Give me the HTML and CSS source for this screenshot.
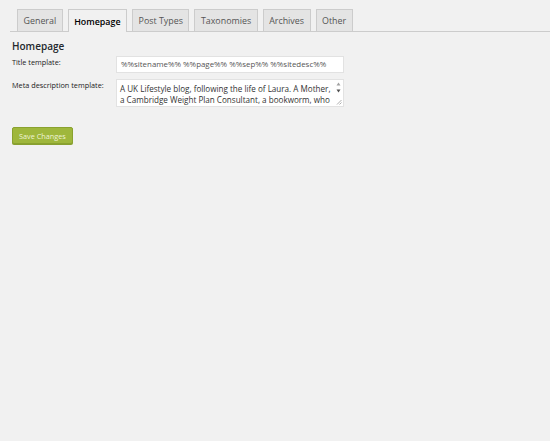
FILE: index.html
```html
<!DOCTYPE html>
<html>
<head>
<meta charset="utf-8">
<link rel="stylesheet" href="styles.css">
</head>
<body>
<div class="wrap">
  <nav class="tabs">
    <span class="tab">General</span>
    <span class="tab active">Homepage</span>
    <span class="tab">Post Types</span>
    <span class="tab">Taxonomies</span>
    <span class="tab">Archives</span>
    <span class="tab">Other</span>
  </nav>
  <div class="content">
    <h3 class="heading">Homepage</h3>
    <div class="row">
      <label class="label">Title template:</label>
      <div class="field">%%sitename%% %%page%% %%sep%% %%sitedesc%%</div>
    </div>
    <div class="row">
      <label class="label">Meta description template:</label>
      <div class="area">
        <div class="area-text">A UK Lifestyle blog, following the life of Laura. A Mother, a Cambridge Weight Plan Consultant, a bookworm, who loves to write and blog about her life and family.</div>
        <div class="scroll">
          <svg class="arr" width="5" height="4" viewBox="0 0 5 4"><path d="M2.5 0.5L4.5 3.5H0.5Z" fill="#a0a0a0"/></svg>
          <svg class="arr" width="5" height="4" viewBox="0 0 5 4"><path d="M0.5 0.5H4.5L2.5 3.5Z" fill="#505050"/></svg>
        </div>
        <svg class="grip" width="6" height="6" viewBox="0 0 6 6"><path d="M5.5 1L1 5.5M5.5 3.5L3.5 5.5" stroke="#999" stroke-width="0.8"/></svg>
      </div>
    </div>
    <button class="save">Save Changes</button>
  </div>
</div>
</body>
</html>
```
FILE: styles.css
```css
html, body {
  margin: 0;
  padding: 0;
  background: #f1f1f1;
  height: 100%;
}
body {
  font-family: "Open Sans", "Liberation Sans", sans-serif;
  color: #444;
}
.wrap {
  padding: 9px 0 0 10px;
}
.tabs {
  display: flex;
  gap: 5px;
  padding-left: 7px;
  border-bottom: 1px solid #cccccc;
  height: 22px;
}
.tab {
  display: flex;
  align-items: center;
  height: 21px;
  padding: 0 5.5px;
  background: #e4e4e4;
  border: 1px solid #cccccc;
  border-bottom: none;
  font-size: 8.9px;
  font-weight: 400;
  color: #555555;
}
.tab.active {
  background: #f1f1f1;
  color: #000000;
  font-weight: 600;
  height: 22px;
  margin-bottom: -1px;
}
.content {
  padding: 8px 0 0 2px;
}
.heading {
  margin: 0 0 4px 0;
  font-size: 10px;
  font-weight: 600;
  color: #23282d;
  line-height: 12px;
}
.row {
  display: flex;
  align-items: flex-start;
  margin-bottom: 6px;
}
.label {
  width: 104px;
  font-size: 7.3px;
  color: #222;
  padding-top: 1px;
  line-height: 10px;
}
.field {
  box-sizing: border-box;
  width: 228px;
  height: 17px;
  background: #fff;
  border: 1px solid #e2e2e2;
  font-size: 7.9px;
  color: #555;
  padding: 0 4px;
  line-height: 15px;
  white-space: nowrap;
  overflow: hidden;
}
.area {
  position: relative;
  box-sizing: border-box;
  width: 228px;
  height: 28px;
  background: #fff;
  border: 1px solid #e2e2e2;
  overflow: hidden;
}
.area-text {
  font-size: 8.1px;
  line-height: 11.2px;
  color: #333;
  padding: 2.5px 6px 0 3px;
}
.scroll {
  position: absolute;
  right: 2px;
  top: 2px;
  display: flex;
  flex-direction: column;
  gap: 3px;
}
.arr {
  display: block;
}
.grip {
  position: absolute;
  right: 1px;
  bottom: 1px;
}
.save {
  margin-top: 14px;
  height: 17px;
  padding: 0 6px;
  background: #9fb73c;
  border: 1px solid #8aa22f;
  border-radius: 2px;
  color: #eef3d6;
  font-family: "Open Sans", "Liberation Sans", sans-serif;
  font-size: 7.3px;
  box-shadow: 0 1px 0 #88a030;
}
```
